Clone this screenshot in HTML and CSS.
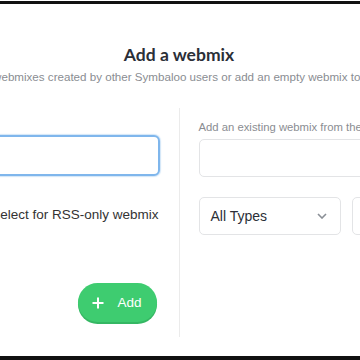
FILE: index.html
```html
<!DOCTYPE html>
<html lang="en">
<head>
    <meta charset="UTF-8">
    <meta name="viewport" content="width=device-width, initial-scale=1.0">
    <title>Add a webmix</title>
    <link rel="stylesheet" href="styles.css">
</head>
<body>
    <div class="frame">
        <div class="modal">
            <h1>Add a webmix</h1>
            <p class="intro">Search through webmixes created by other Symbaloo users or add an empty webmix to your dashboard.</p>

            <div class="columns">
                <div class="col col-left">
                    <input type="text" class="field field-active" value="">
                    <label class="check-row">
                        <input type="checkbox" class="check">
                        <span>Select for RSS-only webmix</span>
                    </label>
                    <div class="actions">
                        <button class="add-btn">
                            <svg width="12" height="12" viewBox="0 0 12 12">
                                <path d="M6 0.5v11M0.5 6h11" stroke="#fff" stroke-width="2" fill="none"/>
                            </svg>
                            <span>Add</span>
                        </button>
                    </div>
                </div>

                <div class="divider"></div>

                <div class="col col-right">
                    <div class="label">Add an existing webmix from the gallery</div>
                    <input type="text" class="field" value="">
                    <div class="filters">
                        <div class="select">
                            <span>All Types</span>
                            <svg width="10" height="6" viewBox="0 0 10 6">
                                <path d="M1 1l4 4 4-4" stroke="#8a8f96" stroke-width="1.6" fill="none"/>
                            </svg>
                        </div>
                        <div class="select">
                            <span>All Languages</span>
                        </div>
                    </div>
                </div>
            </div>
        </div>
    </div>
</body>
</html>
```

FILE: styles.css
```css
* {
    margin: 0;
    padding: 0;
    box-sizing: border-box;
}

body {
    font-family: 'Liberation Sans', Arial, sans-serif;
    background: #fff;
    width: 360px;
    height: 360px;
    overflow: hidden;
    color: #333;
}

.frame {
    height: 359px;
    margin-top: 1px;
    border-top: 3px solid #111;
    border-bottom: 4px solid #111;
    overflow: hidden;
}

.modal {
    width: 600px;
    margin-left: -121px;
    padding-top: 40px;
}

h1 {
    font-family: Lato, 'Liberation Sans', sans-serif;
    font-weight: 700;
    font-size: 17.5px;
    color: #2b2f38;
    text-align: center;
    line-height: 22px;
}

.intro {
    margin-top: 4px;
    font-size: 11.6px;
    line-height: 14px;
    color: #8a8d92;
    text-align: center;
    white-space: nowrap;
}

.columns {
    display: grid;
    grid-template-columns: minmax(0, 1fr) 1px minmax(0, 1fr);
    margin-top: 24px;
    height: 229px;
}

.divider {
    background: #ebebeb;
}

.col {
    min-width: 0;
}

.col-left {
    padding: 27px 19px 0 19px;
    display: flex;
    flex-direction: column;
}

.col-right {
    padding: 12px 0 0 19px;
    overflow: hidden;
}

.field {
    display: block;
    width: 100%;
    height: 38px;
    border: 1px solid #e3e4e6;
    border-radius: 5px;
    background: #fff;
    font: inherit;
    outline: none;
}

.field-active {
    height: 41px;
    border: 2px solid #7fb6ec;
    border-radius: 6px;
    box-shadow: 0 0 1px 1px rgba(127, 182, 236, 0.35);
}

.check-row {
    display: flex;
    justify-content: flex-end;
    align-items: center;
    gap: 8px;
    margin-top: 31px;
    padding-right: 1px;
    font-size: 13.5px;
    color: #333;
}

.check {
    width: 13px;
    height: 13px;
}

.actions {
    display: flex;
    justify-content: flex-end;
    margin-top: 61px;
    padding-right: 3px;
}

.add-btn {
    display: flex;
    align-items: center;
    gap: 13px;
    height: 39px;
    padding: 0 15px 0 14px;
    border: none;
    border-radius: 20px;
    background: #3ecc70;
    box-shadow: 0 2px 0 #35b763;
    color: #fff;
    font-family: inherit;
    font-size: 13.5px;
    cursor: pointer;
}

.label {
    font-size: 11.3px;
    line-height: 14px;
    color: #8a8d92;
    white-space: nowrap;
    margin-bottom: 5px;
}

.filters {
    display: flex;
    gap: 11px;
    margin-top: 20px;
}

.select {
    flex: 0 0 142px;
    height: 38px;
    display: flex;
    align-items: center;
    justify-content: space-between;
    padding: 0 13px 0 11px;
    border: 1px solid #e3e4e6;
    border-radius: 5px;
    font-size: 14px;
    color: #2b2f38;
    white-space: nowrap;
    overflow: hidden;
}
```
